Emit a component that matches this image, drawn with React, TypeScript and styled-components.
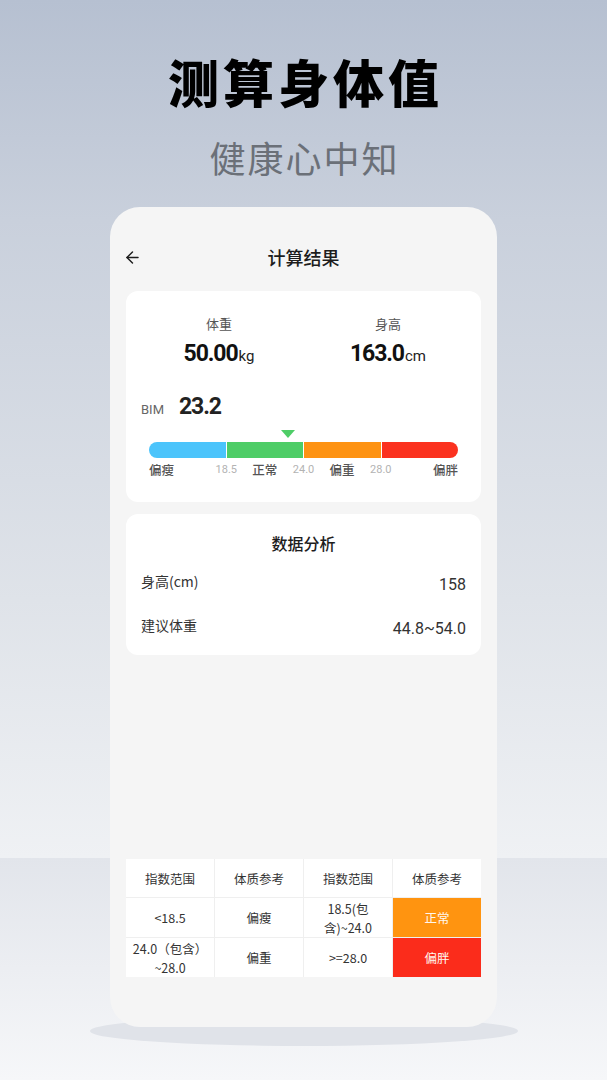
import styled, { createGlobalStyle } from "styled-components"
import { ArrowLeft } from "lucide-react"

const GlobalStyle = createGlobalStyle`
  html, body {
    margin: 0;
    padding: 0;
  }
  body {
    width: 607px;
    min-height: 1080px;
    font-family: "Noto Sans CJK SC", "Noto Sans", sans-serif;
    background: linear-gradient(
      to bottom,
      #b6c0d1 0px,
      #c9d0dc 220px,
      #dfe3e9 600px,
      #eff1f4 858px,
      #e2e5eb 858px,
      #f6f7f9 1080px
    );
    color: #222;
  }
`

const Page = styled.div`
  display: flex;
  flex-direction: column;
  align-items: center;
  padding-top: 51px;
`

const Headline = styled.h1`
  margin: 0;
  font-size: 51px;
  line-height: 60px;
  font-weight: 900;
  letter-spacing: 4px;
  padding-left: 4px;
  color: #000;
`

const Tagline = styled.div`
  margin-top: 22px;
  font-size: 36px;
  line-height: 48px;
  font-weight: 400;
  letter-spacing: 2px;
  padding-left: 2px;
  color: #6b7078;
`

const Stage = styled.div`
  position: relative;
  isolation: isolate;
  margin-top: 26px;

  /* soft floor shadow under the device */
  &::after {
    content: "";
    position: absolute;
    left: 50%;
    bottom: -19px;
    width: 428px;
    height: 30px;
    transform: translateX(-50%);
    border-radius: 50%;
    background: #e0e3e9;
    z-index: -1;
  }
`

const Phone = styled.div`
  position: relative;
  z-index: 1;
  width: 387px;
  height: 820px;
  box-sizing: border-box;
  padding: 28px 16px 50px;
  border-radius: 30px;
  background: #f5f5f5;
  display: flex;
  flex-direction: column;
`

const NavBar = styled.div`
  height: 44px;
  display: grid;
  grid-template-columns: 40px 1fr 40px;
  align-items: center;
`

const BackButton = styled.button`
  justify-self: start;
  margin-left: -3px;
  padding: 0;
  border: 0;
  background: none;
  color: #1d1d1d;
  display: flex;
`

const NavTitle = styled.div`
  text-align: center;
  font-size: 18px;
  font-weight: 500;
  color: #1d1d1d;
`

const Card = styled.div`
  margin-top: 12px;
  background: #fff;
  border-radius: 12px;
`

const BmiCard = styled(Card)`
  padding: 24px 23px 23px;
`

const Stats = styled.div`
  margin: 0 -23px;
  display: grid;
  grid-template-columns: repeat(2, 169px);
  justify-content: center;
`

const Stat = styled.div`
  display: flex;
  flex-direction: column;
  align-items: center;
`

const StatLabel = styled.div`
  font-size: 13px;
  line-height: 18px;
  color: #555;
`

const StatValue = styled.div`
  margin-top: 7px;
  line-height: 28px;
  display: flex;
  align-items: baseline;
  color: #111;
`

const Number = styled.span<{ $size?: number }>`
  font-family: Roboto, "Liberation Sans", sans-serif;
  font-weight: 700;
  font-size: ${p => p.$size ?? 23}px;
  letter-spacing: -1.1px;
`

const Unit = styled.span`
  font-family: Roboto, "Liberation Sans", sans-serif;
  font-size: 15px;
  color: #222;
  margin-left: 1px;
`

const BmiRow = styled.div`
  margin: 23px 0 0 -8px;
  height: 28px;
  display: flex;
  align-items: baseline;
  gap: 15px;
`

const BmiLabel = styled.span`
  font-family: Roboto, "Liberation Sans", sans-serif;
  font-size: 13px;
  color: #666;
`

const MarkerRow = styled.div`
  margin-top: 9px;
  height: 8px;
  display: flex;
`

const Marker = styled.svg`
  width: 14px;
  height: 8px;
  display: block;
`

const Scale = styled.div`
  margin-top: 4px;
  height: 16px;
  border-radius: 8px;
  overflow: hidden;
  display: grid;
  grid-template-columns: repeat(4, 1fr);
  gap: 1px;
  background: #fff;
`

const Segment = styled.div<{ $color: string }>`
  background: ${p => p.$color};
`

const ScaleLabels = styled.div`
  position: relative;
  margin-top: 3px;
  height: 18px;
  display: grid;
  grid-template-columns: repeat(4, 1fr);
`

const ScaleName = styled.span<{ $align: string }>`
  justify-self: ${p => p.$align};
  font-size: 12.5px;
  line-height: 18px;
  font-weight: 500;
  color: #555;
`

const Tick = styled.span<{ $at: number }>`
  position: absolute;
  top: 0;
  left: ${p => p.$at}%;
  transform: translateX(-50%);
  font-family: Roboto, "Liberation Sans", sans-serif;
  font-size: 11px;
  line-height: 18px;
  color: #b3b3b3;
`

const AnalysisCard = styled(Card)`
  padding: 18px 15px 8px;
`

const CardTitle = styled.div`
  text-align: center;
  font-size: 16px;
  line-height: 22px;
  font-weight: 500;
  color: #1d1d1d;
  margin-bottom: 5px;
`

const InfoRow = styled.div`
  height: 44px;
  display: flex;
  align-items: center;
  justify-content: space-between;
`

const InfoLabel = styled.span`
  font-size: 14px;
  line-height: 20px;
  color: #333;
`

const InfoValue = styled.span`
  padding-top: 8px;
  font-family: Roboto, "Liberation Sans", sans-serif;
  font-size: 16px;
  line-height: 22px;
  color: #333;
`

const Table = styled.div`
  margin-top: auto;
  display: grid;
  grid-template-columns: repeat(4, 1fr);
  grid-template-rows: 38px 39px 39px;
  gap: 1px;
  background: #efefef;
`

const Cell = styled.div<{ $bg?: string }>`
  display: flex;
  align-items: center;
  justify-content: center;
  text-align: center;
  padding: 0 2px;
  font-size: 12.5px;
  line-height: 19px;
  font-weight: 400;
  background: ${p => p.$bg ?? "#fff"};
  color: ${p => (p.$bg ? "#fff7ee" : "#333")};
`

const segments = ["#4bc4fb", "#4ecd67", "#fe9313", "#fb321f"]
const bounds = [10, 18.5, 24, 28, 34]

function markerPercent(bmi: number) {
  for (let i = 0; i < 4; i++) {
    if (bmi < bounds[i + 1]) {
      const frac = (bmi - bounds[i]) / (bounds[i + 1] - bounds[i])
      return ((i + frac) / 4) * 100
    }
  }
  return 100
}

const App = () => {
  const bmi = 23.2
  const pos = markerPercent(bmi) - 1.5

  return (
    <>
      <GlobalStyle />
      <Page>
        <Headline>测算身体值</Headline>
        <Tagline>健康心中知</Tagline>

        <Stage>
          <Phone>
            <NavBar>
              <BackButton aria-label="返回">
                <ArrowLeft size={19} strokeWidth={1.8} />
              </BackButton>
              <NavTitle>计算结果</NavTitle>
            </NavBar>

            <BmiCard>
              <Stats>
                <Stat>
                  <StatLabel>体重</StatLabel>
                  <StatValue>
                    <Number>50.00</Number>
                    <Unit>kg</Unit>
                  </StatValue>
                </Stat>
                <Stat>
                  <StatLabel>身高</StatLabel>
                  <StatValue>
                    <Number>163.0</Number>
                    <Unit>cm</Unit>
                  </StatValue>
                </Stat>
              </Stats>

              <BmiRow>
                <BmiLabel>BIM</BmiLabel>
                <Number>{bmi}</Number>
              </BmiRow>

              <MarkerRow>
                <Marker viewBox="0 0 14 8" style={{ marginLeft: `calc(${pos}% - 7px)` }}>
                  <path d="M0 0H14L7 8Z" fill="#4ecd67" />
                </Marker>
              </MarkerRow>
              <Scale>
                {segments.map(c => (
                  <Segment key={c} $color={c} />
                ))}
              </Scale>
              <ScaleLabels>
                <ScaleName $align="start">偏瘦</ScaleName>
                <ScaleName $align="center">正常</ScaleName>
                <ScaleName $align="center">偏重</ScaleName>
                <ScaleName $align="end">偏胖</ScaleName>
                <Tick $at={25}>18.5</Tick>
                <Tick $at={50}>24.0</Tick>
                <Tick $at={75}>28.0</Tick>
              </ScaleLabels>
            </BmiCard>

            <AnalysisCard>
              <CardTitle>数据分析</CardTitle>
              <InfoRow>
                <InfoLabel>身高(cm)</InfoLabel>
                <InfoValue>158</InfoValue>
              </InfoRow>
              <InfoRow>
                <InfoLabel>建议体重</InfoLabel>
                <InfoValue>44.8~54.0</InfoValue>
              </InfoRow>
            </AnalysisCard>

            <Table>
              <Cell>指数范围</Cell>
              <Cell>体质参考</Cell>
              <Cell>指数范围</Cell>
              <Cell>体质参考</Cell>
              <Cell>&lt;18.5</Cell>
              <Cell>偏瘦</Cell>
              <Cell>
                18.5(包
                <br />
                含)~24.0
              </Cell>
              <Cell $bg="#ff9410">正常</Cell>
              <Cell>
                24.0（包含）
                <br />
                ~28.0
              </Cell>
              <Cell>偏重</Cell>
              <Cell>&gt;=28.0</Cell>
              <Cell $bg="#fb2c1b">偏胖</Cell>
            </Table>
          </Phone>
        </Stage>
      </Page>
    </>
  )
}

export default App
